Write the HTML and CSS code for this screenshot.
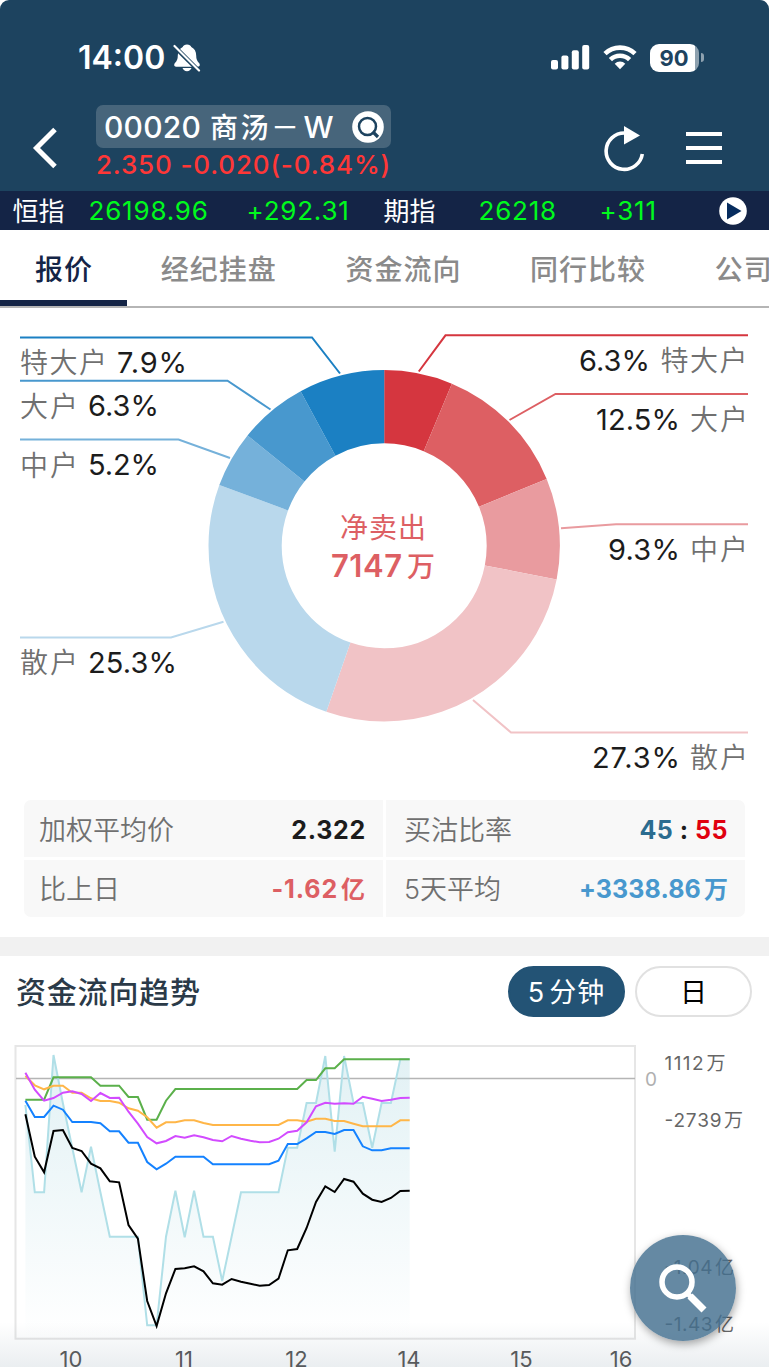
FILE: index.html
```html
<!DOCTYPE html>
<html lang="zh-CN">
<head>
  <meta charset="UTF-8">
  <title>00020 商汤－W</title>
  <link rel="stylesheet" href="styles.css">
</head>
<body>
  <div id="app">
    <header class="header">
      <div class="status">
        <span class="time">14:00</span>
        <svg class="bell" width="28" height="30" viewBox="0 0 28 30">
          <path d="M14 1.500c-2.200 0-3.800.9-4.300 2.500C6.500 5.500 4.800 8.500 4.800 12.500c0 3.800-.9 5.300-2.800 7.500-1.400 1.600-.8 3.700 1 3.700h22c1.800 0 2.400-2.100 1-3.700-1.900-2.200-2.800-3.700-2.800-7.500 0-4-1.700-7-4.900-8.500-.5-1.600-2.100-2.500-4.300-2.500zM9.500 25h9c-.7 2-2.300 3.200-4.500 3.200S10.200 27 9.500 25z" fill="#fff"/>
          <path d="M1 3l25 25" stroke="#1d435f" stroke-width="4.500"/>
          <path d="M1.500 3l24.500 24.500" stroke="#fff" stroke-width="2.200" stroke-linecap="round"/>
        </svg>
        <svg class="signal" width="39" height="25" viewBox="0 0 39 25" fill="#fff">
          <rect x="0" y="15" width="7" height="9.500" rx="2"/>
          <rect x="10.400" y="10.500" width="7" height="14" rx="2"/>
          <rect x="20.800" y="5.300" width="7" height="19.200" rx="2"/>
          <rect x="31.200" y="0" width="7" height="24.500" rx="2"/>
        </svg>
        <svg class="wifi" width="34" height="25" viewBox="0 0 34 25">
          <g fill="none" stroke="#fff" stroke-width="4.600">
            <path d="M2 8.700a21.500 21.500 0 0 1 30 0"/>
            <path d="M7.400 14.600a13.800 13.800 0 0 1 19.200 0"/>
          </g>
          <path d="M11.700 18.700a7.600 7.600 0 0 1 10.600 0L17 24.200z" fill="#fff"/>
        </svg>
        <span class="battery">90</span>
        <i class="battery-tip"></i>
      </div>
      <div class="nav">
        <svg class="back" width="26" height="42" viewBox="0 0 26 42"><path d="M23 2.500L4.500 21 23 39.500" fill="none" stroke="#fff" stroke-width="5"/></svg>
        <div class="stock">
          <div class="stock-name">
            <span class="code">00020</span>
            <span class="cn">商汤－</span>
            <span class="code">W</span>
            <svg width="32" height="32" viewBox="0 0 32 32">
              <circle cx="16" cy="16" r="15.800" fill="#fff"/>
              <circle cx="15.500" cy="15.500" r="8.500" fill="none" stroke="#1d435f" stroke-width="2.500"/>
              <path d="M20.500 20.500l5.500 5.500" stroke="#1d435f" stroke-width="3.200"/>
            </svg>
          </div>
          <div class="stock-price">2.350 -0.020(-0.84%)</div>
        </div>
        <svg class="refresh" width="42" height="48" viewBox="0 0 42 48">
          <path d="M20.500 8a18.200 18.200 0 1 0 17.800 21" fill="none" stroke="#fff" stroke-width="3.600" stroke-linejoin="round"/>
          <path d="M20 1l16 9.500L20 19.500z" fill="#fff"/>
        </svg>
        <div class="menu"><i></i><i></i><i></i></div>
      </div>
    </header>
    <div class="ticker">
      <span>恒指</span>
      <b>26198.96</b>
      <b>+292.31</b>
      <span>期指</span>
      <b>26218</b>
      <b>+311</b>
      <svg width="28" height="28" viewBox="0 0 28 28"><circle cx="14" cy="14" r="13.800" fill="#fff"/><path d="M8 5.500L22.500 14 8 22.500z" fill="#062c5e"/></svg>
    </div>
    <nav class="tabs">
      <a class="on">报价</a>
      <a>经纪挂盘</a>
      <a>资金流向</a>
      <a>同行比较</a>
      <a>公司</a>
    </nav>
    <svg class="donut" width="769" height="492" viewBox="0 308 769 492">
      <g id="ring" fill="none" stroke-width="73.200" transform="rotate(-90 384.200 545.800)"></g>
      <g fill="none" stroke-width="2">
        <path d="M20 337.500H312L340 373.500" stroke="#1b80c3"/>
        <path d="M20 380.700H227.500L270.500 409.500" stroke="#4898ce"/>
        <path d="M20 439.500H178.500L230 458" stroke="#75b1da"/>
        <path d="M20 637.500H171L223.500 621.800" stroke="#b9d8ec"/>
        <path d="M748 335.300H445.500L418.800 371.500" stroke="#d5363f"/>
        <path d="M748 394H555.500L509.500 420" stroke="#dd5f63"/>
        <path d="M748 524.200H616L561 528.300" stroke="#e99b9f"/>
        <path d="M748 732.500H511L473 700" stroke="#f1c3c6"/>
      </g>
      <g class="who">
        <text x="20" y="373" textLength="87">特大户</text>
        <text x="20" y="416.500" textLength="58">大户</text>
        <text x="20" y="475.500" textLength="58">中户</text>
        <text x="20" y="673" textLength="58">散户</text>
        <text x="660.500" y="371" textLength="87">特大户</text>
        <text x="690" y="430" textLength="58">大户</text>
        <text x="690" y="560" textLength="58">中户</text>
        <text x="690" y="768" textLength="58">散户</text>
      </g>
      <g class="pct">
        <text x="117" y="372.500" textLength="70">7.9%</text>
        <text x="88" y="416" textLength="71">6.3%</text>
        <text x="88" y="475" textLength="71">5.2%</text>
        <text x="88" y="673" textLength="89">25.3%</text>
        <text x="579" y="371" textLength="71">6.3%</text>
        <text x="596" y="429.500" textLength="84">12.5%</text>
        <text x="608" y="560" textLength="72">9.3%</text>
        <text x="592" y="767.500" textLength="88">27.3%</text>
      </g>
      <g class="net">
        <text x="340" y="538" textLength="86">净卖出</text>
        <text class="num" x="331" y="577" textLength="71">7147</text>
        <text class="unit" x="407" y="577">万</text>
      </g>
    </svg>
    <div class="stats">
      <div><span>加权平均价</span><b class="black">2.322</b></div>
      <div><span>买沽比率</span><b class="ratio"><em>45</em> : <i>55</i></b></div>
      <div><span>比上日</span><b class="red">-1.62<small>亿</small></b></div>
      <div><span>5天平均</span><b class="blue">+3338.86<small>万</small></b></div>
    </div>
    <section class="trend">
      <div class="trend-head">
        <h2>资金流向趋势</h2>
        <button class="pill on">5<span>分钟</span></button>
        <button class="pill">日</button>
      </div>
      <svg width="769" height="338" viewBox="0 1030 769 338">
        <defs>
          <linearGradient id="fade" x1="0" y1="0" x2="0" y2="1">
            <stop offset="0" stop-color="#a9d6e0" stop-opacity=".34"/>
            <stop offset="1" stop-color="#a9d6e0" stop-opacity="0"/>
          </linearGradient>
        </defs>
        <rect x="15.500" y="1046" width="619.500" height="292.700" fill="none" stroke="#e6e6e6" stroke-width="2"/>
        <path d="M16 1078.500H635" stroke="#b5b5b5" stroke-width="1.500"/>
        <g id="lines" fill="none" stroke-width="2" stroke-linejoin="miter"></g>
        <g class="hours">
          <text x="71" y="1366.500">10</text>
          <text x="184" y="1366.500">11</text>
          <text x="296.500" y="1366.500">12</text>
          <text x="409" y="1366.500">14</text>
          <text x="521.500" y="1366.500">15</text>
          <text x="621" y="1366.500">16</text>
        </g>
        <text class="zero" x="645" y="1085.500">0</text>
        <g class="axis">
          <text x="664.500" y="1069.500" textLength="39">1112</text><text x="706.500" y="1069.500">万</text>
          <text x="664.500" y="1126.500" textLength="57">-2739</text><text x="724" y="1126.500">万</text>
          <text x="664.500" y="1273.500" textLength="48">-1.04</text><text x="715" y="1273.500">亿</text>
          <text x="664.500" y="1331" textLength="48">-1.43</text><text x="715" y="1331">亿</text>
        </g>
      </svg>
    </section>
    <div class="bottom-shade"></div>
    <div class="fab">
      <svg width="106" height="106" viewBox="0 0 106 106" fill="none" stroke="#fff"><circle cx="47" cy="47" r="15" stroke-width="5.500"/><path d="M57 58l4 4" stroke-width="5"/><path d="M60 61l14 14" stroke-width="7"/></svg>
    </div>
  </div>
  <script src="chart.js"></script>
</body>
</html>
```
FILE: styles.css
```css
*{
  box-sizing: border-box;
}
body{
  margin: 0;
  background: #fff;
  font-family: Inter, "Noto Sans CJK SC", sans-serif;
}
i, em{
  font-style: normal;
}
svg{
  display: block;
  flex: none;
}
#app{
  position: relative;
  width: 769px;
  height: 1368px;
  overflow: hidden;
}
.header{
  height: 191px;
  background: #1d435f;
  border-radius: 9px 9px 0 0;
  color: #fff;
}
.status{
  display: flex;
  align-items: center;
  height: 105px;
  padding: 10px 0 0 78px;
}
.time{
  width: 95px;
  font-size: 32px;
  font-weight: 600;
}
.signal{
  margin-left: 350px;
}
.wifi{
  margin-left: 13px;
}
.battery{
  width: 49px;
  height: 28px;
  margin-left: 13px;
  border-radius: 9px;
  background: linear-gradient(90deg, #fff 45px, #8ea1af 45px);
  color: #1d435f;
  font-size: 22px;
  font-weight: 700;
  line-height: 28px;
  padding-left: 9.500px;
}
.battery-tip{
  width: 3px;
  height: 9px;
  margin-left: 2px;
  border-radius: 0 4px 4px 0;
  background: #8ea1af;
}
.nav{
  display: flex;
  height: 86px;
  padding-left: 32px;
}
.back{
  margin-top: 22px;
}
.stock{
  width: 295px;
  margin-left: 38px;
}
.stock-name{
  display: flex;
  align-items: center;
  height: 43px;
  padding: 0 7px 0 8px;
  border-radius: 7px;
  background: #47657b;
  font-size: 30px;
  font-weight: 500;
}
.stock-name .code{
  letter-spacing: .2px;
}
.stock-name .cn{
  margin: 0 2px 2px 9px;
  font-size: 28px;
  letter-spacing: 2.500px;
}
.stock-name svg{
  margin-left: auto;
}
.stock-price{
  color: #ff3737;
  font-size: 26px;
  font-weight: 500;
  line-height: 34px;
  letter-spacing: .85px;
  white-space: nowrap;
}
.refresh{
  margin: 20px 0 0 213px;
}
.menu{
  display: flex;
  flex-direction: column;
  gap: 9.700px;
  margin: 27px 0 0 40px;
}
.menu i{
  width: 36px;
  height: 4.300px;
  background: #fff;
}
.ticker{
  display: grid;
  grid-template-columns: 76px 158px 137px 95px 121px 119px 28px;
  align-items: center;
  height: 39px;
  padding-left: 12.500px;
  background: #142446;
  color: #fff;
  font-size: 26px;
}
.ticker span{
  margin-top: -2px;
}
.ticker b{
  color: #00fa1d;
  font-weight: 400;
  letter-spacing: .8px;
}
.tabs{
  display: flex;
  height: 78px;
  border-bottom: 2px solid #b5b5b5;
  overflow: hidden;
  white-space: nowrap;
}
.tabs a{
  flex: none;
  padding: 1px 34.300px 0;
  color: #8a8a8a;
  font-size: 28px;
  font-weight: 500;
  letter-spacing: 1px;
  line-height: 78px;
}
.tabs .on{
  width: 126.500px;
  padding-left: 35px;
  border-bottom: 6px solid #142446;
  color: #142446;
}
.who{
  fill: #707070;
  font-size: 28px;
  font-weight: 350;
}
.pct{
  fill: #1c1c1c;
  font-size: 29px;
}
.net{
  fill: #dd5f63;
  font-size: 28px;
}
.net .num{
  font-size: 31px;
  font-weight: 600;
}
.net .unit{
  font-weight: 500;
}
.stats{
  display: grid;
  grid-template-columns: 359px 359px;
  grid-auto-rows: 57px;
  gap: 3px;
  width: 721px;
  height: 117px;
  margin-left: 24px;
  border-radius: 7px;
  overflow: hidden;
}
.stats div{
  display: flex;
  align-items: center;
  justify-content: space-between;
  padding: 3px 17px 0 15px;
  background: #f8f8f8;
  color: #707070;
  font-size: 27px;
  line-height: 30px;
}
.stats div:nth-child(2n){
  padding-left: 18px;
}
.stats div:nth-child(n+3){
  padding-top: 1px;
}
.stats span{
  margin-top: 1px;
  font-weight: 350;
}
.stats b{
  font-size: 25px;
  font-weight: 700;
  letter-spacing: .5px;
}
.stats small{
  margin-left: 3px;
  font-size: 24px;
  font-weight: 600;
}
.stats .black{
  color: #1c1c1c;
  letter-spacing: .7px;
}
.ratio{
  color: #1c1c1c;
}
.stats .red{
  color: #dd5f63;
  letter-spacing: .9px;
}
.stats .blue{
  color: #4898ce;
  letter-spacing: .1px;
}
.ratio em{
  color: #2b6c8f;
}
.ratio i{
  color: #e0000f;
}
.trend{
  margin-top: 20px;
  border-top: 19px solid #f1f1f1;
}
.trend-head{
  display: flex;
  align-items: center;
  height: 74px;
  padding: 0 17px 4px 16px;
}
.trend-head h2{
  flex: 1;
  margin: -3px 0 0;
  color: #2b3a48;
  font-size: 30px;
  font-weight: 500;
  letter-spacing: .8px;
}
.pill{
  width: 117px;
  height: 51px;
  margin-left: 10px;
  padding: 3px 0 0;
  border: 2px solid #e1e1e1;
  border-radius: 26px;
  background: #fff;
  color: #000;
  font: 27px/40px Inter, "Noto Sans CJK SC", sans-serif;
}
.pill.on{
  border-color: #235375;
  background: #235375;
  color: #fff;
}
.pill span{
  margin-left: 5px;
  letter-spacing: 1px;
}
.hours{
  fill: #5c5c5c;
  font-size: 22px;
  text-anchor: middle;
}
.zero{
  fill: #b0b0b0;
  font-size: 19px;
}
.axis{
  fill: #666;
  font-size: 19px;
}
.bottom-shade{
  position: absolute;
  left: 0;
  right: 0;
  bottom: 1px;
  height: 45px;
  background: linear-gradient(rgba(29,67,95,0), rgba(29,67,95,.09));
}
.fab{
  position: absolute;
  left: 630px;
  top: 1235px;
  width: 106px;
  height: 106px;
  border-radius: 50%;
  background: rgba(67,111,143,.82);
  box-shadow: 1px 3px 9px rgba(0,0,0,.35);
}
```
FILE: chart.js
```js
var ns = 'http://www.w3.org/2000/svg';
function add(parent, tag, attrs){
  var el = document.createElementNS(ns, tag);
  for (var k in attrs) {
    el.setAttribute(k, attrs[k]);
  }
  parent.appendChild(el);
}

// 资金分布
var parts = [
  [6.3, '#d5363f'], [12.5, '#dd5f63'], [9.3, '#e99b9f'], [27.3, '#f1c3c6'],
  [25.3, '#b9d8ec'], [5.2, '#75b1da'], [6.3, '#4898ce'], [7.9, '#1b80c3']
];
var total = 100.1;
var start = 0;
var ring = document.getElementById('ring');
parts.forEach(function(p){
  add(ring, 'circle', {
    cx: 384.2, cy: 545.8, r: 139.1, stroke: p[1], pathLength: total,
    'stroke-dasharray': p[0] + ' ' + (total - p[0]),
    'stroke-dashoffset': -start
  });
  start += p[0];
});

// 资金流向趋势
var price = [225,487,487,75,220,354,487,350,487,620,620,620,620,886,886,620,482,622,482,620,620,753,620,487,487,487,487,487,353,353,219,219,78,365,78,219,219,353,219,219,88,88];
var series = [
  ['#5bb04b', [209,209,209,142,142,142,142,142,167,167,167,201,201,269,269,212,177,177,177,177,177,177,177,177,177,177,177,177,177,177,150,150,115,115,88,88,88,88,88,88,88,88]],
  ['#ffb648', [138,166,178,167,167,188,188,205,213,213,218,235,242,262,293,277,277,271,271,279,285,285,285,285,285,285,285,285,271,271,275,266,266,273,273,281,289,289,289,289,271,271]],
  ['#d24bff', [128,179,212,204,188,184,192,213,189,204,203,245,281,321,340,333,318,323,316,322,330,334,318,326,332,337,336,326,307,302,277,229,218,221,220,221,200,206,213,209,204,203]],
  ['#1482ff', [212,261,261,227,239,276,276,276,280,304,304,338,338,396,418,401,380,380,380,380,403,403,403,403,403,403,403,392,342,342,325,306,306,312,300,300,349,361,361,355,355,355]],
  ['#000', [253,380,427,303,300,354,363,401,415,454,457,585,626,813,888,790,717,715,709,724,760,764,747,755,761,767,765,746,661,657,594,516,469,486,447,455,491,509,516,504,483,482]]
];
function points(list){
  return list.map(function(v, i){
    return (25.4 + i * 9.373).toFixed(1) + ',' + (1030 + v / 3).toFixed(1);
  }).join(' ');
}
var lines = document.getElementById('lines');
add(lines, 'polygon', {points: '25.4,1338 ' + points(price) + ' 409.7,1338', fill: 'url(#fade)'});
add(lines, 'polyline', {points: points(price), stroke: '#b0dfe7'});
series.forEach(function(s){
  add(lines, 'polyline', {points: points(s[1]), stroke: s[0]});
});
```
